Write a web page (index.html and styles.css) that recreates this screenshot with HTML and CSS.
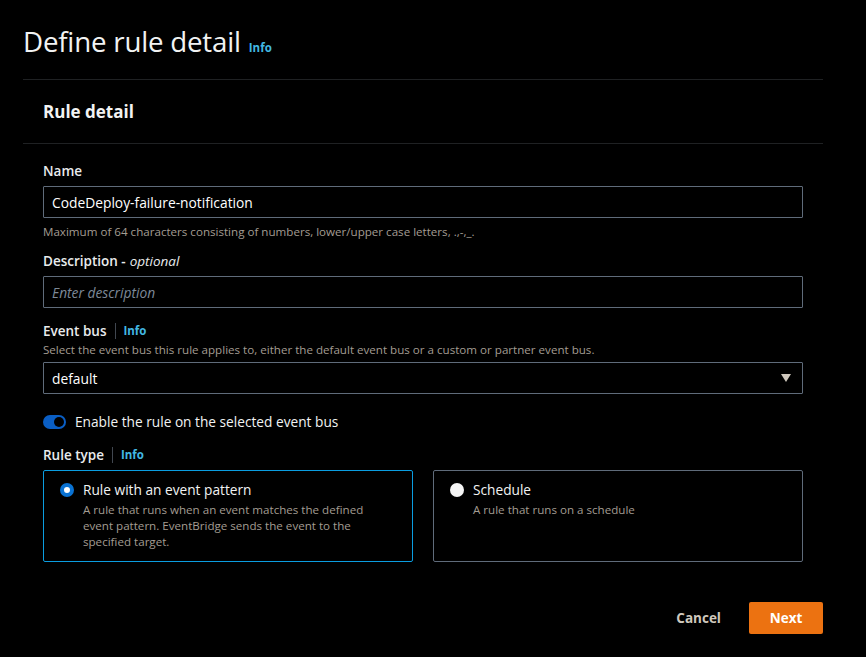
FILE: index.html
```html
<!DOCTYPE html>
<html>
<head>
<meta charset="utf-8">
<link rel="stylesheet" href="styles.css">
</head>
<body>
<div class="page">
  <h1 class="title">Define rule detail <a class="info">Info</a></h1>
  <section class="card">
    <div class="card-head"><h2>Rule detail</h2></div>
    <div class="card-body">
      <div class="field">
        <label class="label">Name</label>
        <div class="input">CodeDeploy-failure-notification</div>
        <div class="hint">Maximum of 64 characters consisting of numbers, lower/upper case letters, .,-,_.</div>
      </div>
      <div class="field desc">
        <label class="label">Description - <i>optional</i></label>
        <div class="input placeholder">Enter description</div>
      </div>
      <div class="field">
        <label class="label">Event bus <span class="sep"></span><a class="info">Info</a></label>
        <div class="hint top">Select the event bus this rule applies to, either the default event bus or a custom or partner event bus.</div>
        <div class="input select">default<span class="caret"></span></div>
      </div>
      <div class="toggle-row">
        <span class="toggle"><span class="knob"></span></span>
        <span class="toggle-label">Enable the rule on the selected event bus</span>
      </div>
      <div class="field">
        <label class="label">Rule type <span class="sep"></span><a class="info">Info</a></label>
        <div class="tiles">
          <div class="tile selected">
            <span class="radio on"></span>
            <div>
              <div class="tile-title">Rule with an event pattern</div>
              <div class="tile-desc">A rule that runs when an event matches the defined event pattern. EventBridge sends the event to the specified target.</div>
            </div>
          </div>
          <div class="tile">
            <span class="radio"></span>
            <div>
              <div class="tile-title">Schedule</div>
              <div class="tile-desc">A rule that runs on a schedule</div>
            </div>
          </div>
        </div>
      </div>
    </div>
  </section>
  <div class="actions">
    <button class="btn-link">Cancel</button>
    <button class="btn-primary">Next</button>
  </div>
</div>
</body>
</html>
```
FILE: styles.css
```css
html, body {
  margin: 0;
  padding: 0;
  background: #000;
  color: #e9ebed;
  font-family: "Open Sans", "Noto Sans", sans-serif;
}
.page {
  padding: 24px 43px 0 23px;
}
.title {
  margin: 0;
  font-size: 27.7px;
  font-weight: 400;
  line-height: 34px;
  color: #f2f3f3;
  letter-spacing: -0.2px;
}
.info {
  color: #42b8e3;
  font-size: 11.5px;
  font-weight: 700;
  letter-spacing: 0;
}
.title .info {
  margin-left: 1px;
}
.card {
  margin-top: 14px;
  border-top: 1px solid #1f2123;
}
.card-head {
  padding: 0 20px;
  height: 63px;
  display: flex;
  align-items: center;
  border-bottom: 1px solid #1f2123;
}
.card-head h2 {
  margin: 0;
  font-size: 17px;
  font-weight: 700;
  color: #f2f3f3;
}
.card-body {
  padding: 16px 20px 0 20px;
  display: flex;
  flex-direction: column;
}
.field {
  display: flex;
  flex-direction: column;
  margin-bottom: 14px;
}
.field.desc {
  margin-bottom: 12px;
}
.label {
  font-size: 13.5px;
  font-weight: 600;
  line-height: 22px;
  color: #e9ebed;
  display: flex;
  align-items: center;
  margin-bottom: 4px;
}
.label i {
  font-weight: 400;
  margin-left: 4px;
}
.sep {
  display: inline-block;
  width: 1px;
  height: 16px;
  background: #414750;
  margin: 0 8px 0 8px;
}
.input {
  height: 30px;
  border: 1px solid #5f6b7a;
  border-radius: 1px;
  display: flex;
  align-items: center;
  padding: 0 8px;
  font-size: 13.8px;
  color: #fff;
}
.placeholder {
  color: #7d8998;
  font-style: italic;
}
.select {
  justify-content: space-between;
}
.caret {
  width: 0;
  height: 0;
  border-left: 5px solid transparent;
  border-right: 5px solid transparent;
  border-top: 8px solid #cfc8bd;
  margin-right: 3px;
}
.hint {
  font-size: 11.6px;
  color: #a39c92;
  line-height: 16px;
  margin-top: 6px;
  margin-bottom: -4px;
}
.hint.top {
  margin-top: -4px;
  margin-bottom: 4px;
}
.toggle-row {
  display: flex;
  align-items: center;
  gap: 9px;
  margin: 4px 0 13px;
}
.toggle {
  width: 23px;
  height: 14px;
  box-sizing: border-box;
  border-radius: 8px;
  background: #0a5ec4;
  display: flex;
  align-items: center;
  justify-content: flex-end;
  padding: 0 2px;
}
.knob {
  width: 10px;
  height: 10px;
  border-radius: 50%;
  background: #000;
}
.toggle-label {
  font-size: 13.7px;
  color: #f2f3f3;
}
.tiles {
  display: grid;
  grid-template-columns: 1fr 1fr;
  gap: 20px;
  margin-top: 0;
}
.tile {
  border: 1px solid #5f6b7a;
  border-radius: 2px;
  display: flex;
  gap: 9px;
  padding: 9px 36px 10px 16px;
  box-sizing: border-box;
  height: 92px;
}
.tile.selected {
  border-color: #0a9de0;
}
.radio {
  flex: none;
  width: 14px;
  height: 14px;
  border-radius: 50%;
  background: #f5f5f5;
  margin-top: 3px;
  box-sizing: border-box;
}
.radio.on {
  background: #fff;
  border: 4px solid #0972d3;
}
.tile-title {
  font-size: 13.7px;
  color: #f2f3f3;
  line-height: 20px;
}
.tile-desc {
  font-size: 11.6px;
  color: #a39c92;
  line-height: 16px;
  margin-top: 2px;
}
.actions {
  display: flex;
  justify-content: flex-end;
  align-items: center;
  gap: 20px;
  margin-top: 26px;
}
.btn-link {
  background: none;
  border: none;
  color: #cfc8bd;
  font-family: inherit;
  font-size: 13.5px;
  font-weight: 700;
  padding: 0 8px;
}
.btn-primary {
  background: #ec7211;
  border: none;
  border-radius: 2px;
  color: #fff;
  font-family: inherit;
  font-size: 13.5px;
  font-weight: 700;
  width: 74px;
  height: 32px;
}
```
